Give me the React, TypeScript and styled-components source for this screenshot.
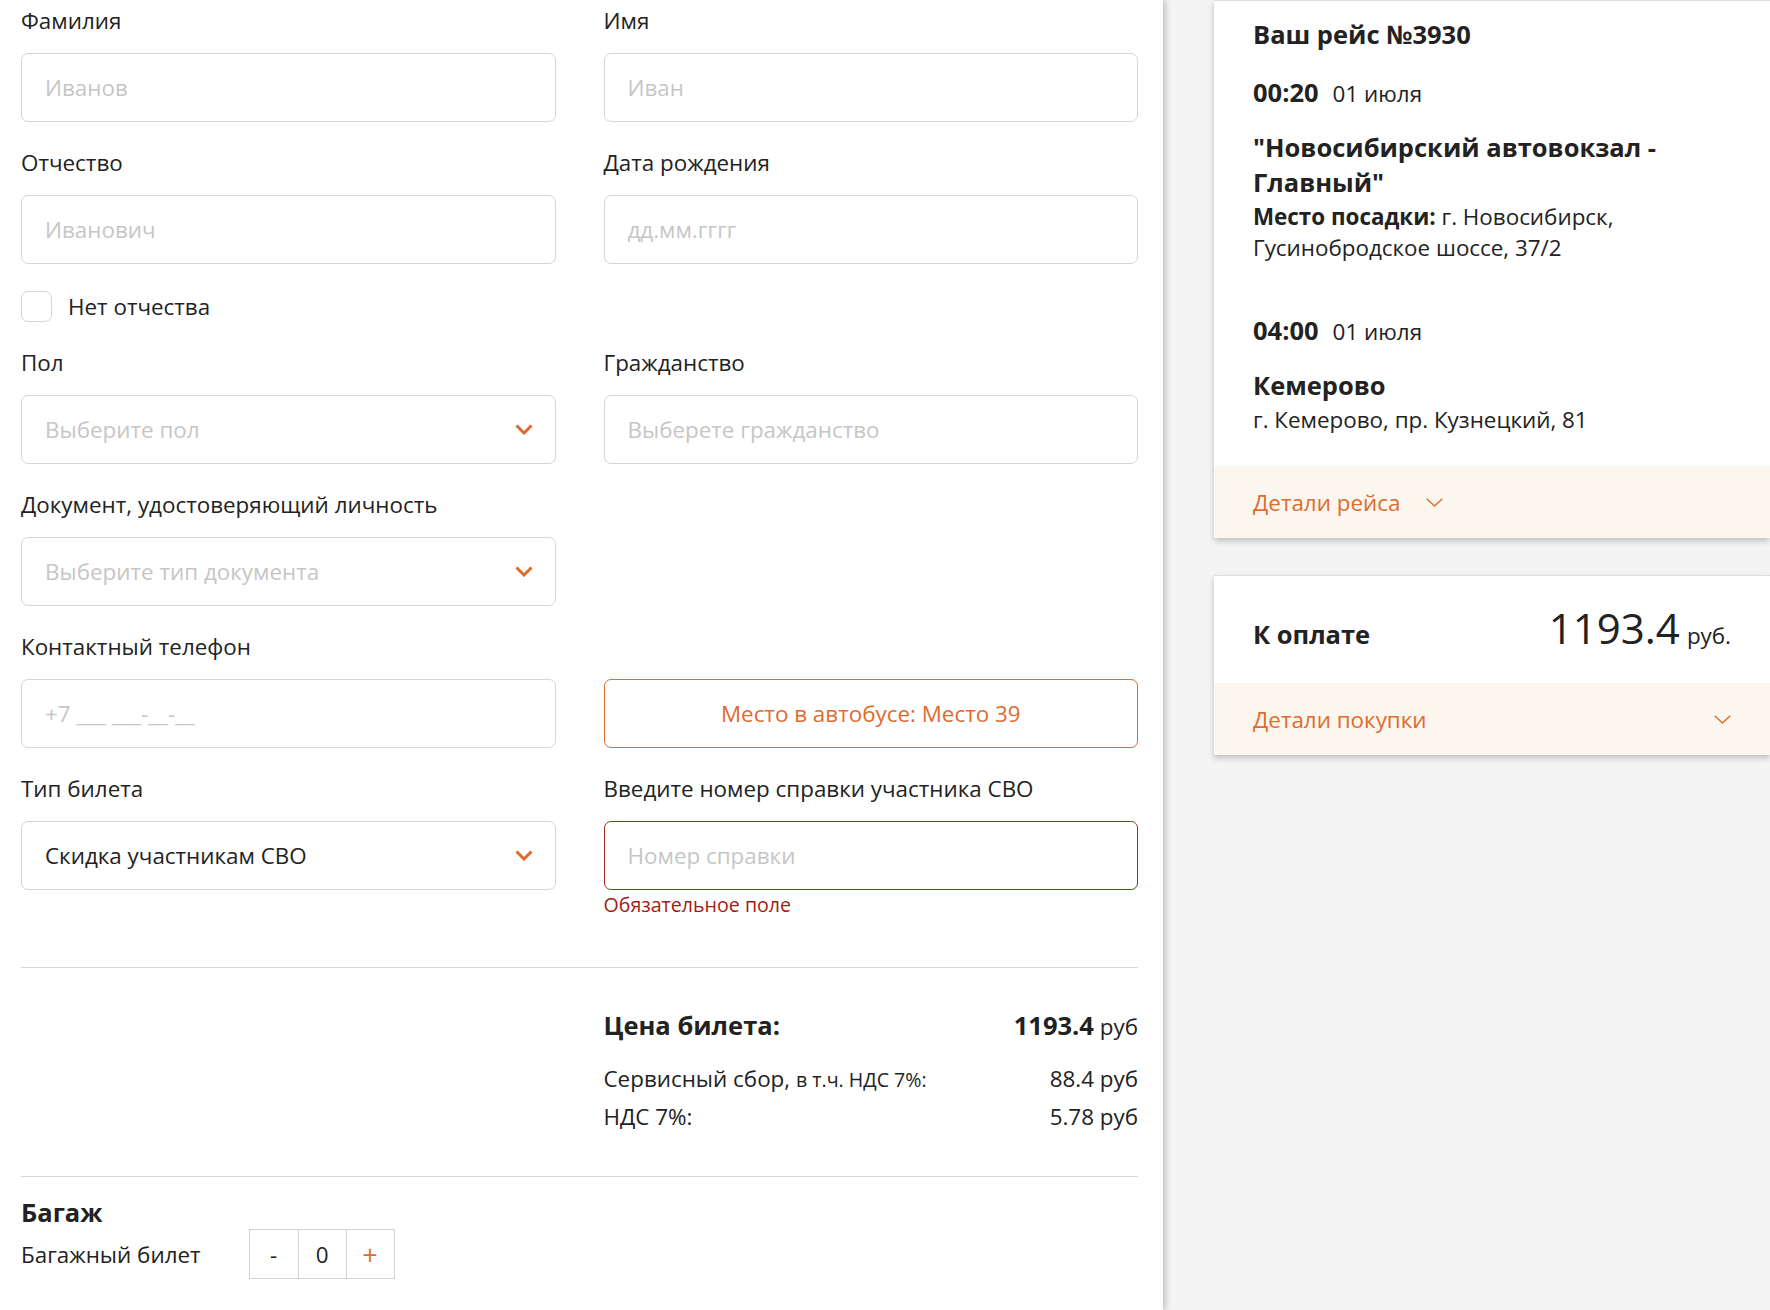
import styled, { createGlobalStyle } from 'styled-components'

const GlobalStyle = createGlobalStyle`
    html, body {
        margin: 0;
        padding: 0;
        background: #f4f4f4;
    }

    body {
        font-family: "Open Sans", "Liberation Sans", sans-serif;
        color: #222;
    }

    * {
        box-sizing: border-box;
    }
`

const orange = '#e06b2e'

const Page = styled.div`
    display: grid;
    grid-template-columns: 1163px 1fr;
    min-height: 1310px;
    background: #f4f4f4;
`

const FormPanel = styled.main`
    position: relative;
    z-index: 1;
    background: #fff;
    padding: 7px 25px 0 21px;
    box-shadow: 3px 0 6px rgba(0, 0, 0, 0.2);
`

const FieldGrid = styled.div`
    display: grid;
    grid-template-columns: 1fr 1fr;
    column-gap: 48px;
    row-gap: 27px;
    align-items: start;
`

const Field = styled.div`
    display: flex;
    flex-direction: column;
    gap: 18px;
`

const Label = styled.label`
    font-size: 22.4px;
    line-height: 28px;
    color: #222;
`

const TextInput = styled.input<{ $invalid?: boolean }>`
    width: 100%;
    height: 69px;
    padding: 0 23px;
    border: 1px solid ${p => (p.$invalid ? '#a9271b' : '#d6d6d6')};
    border-radius: 7px;
    background: #fff;
    font-family: inherit;
    font-size: 22.4px;
    color: #222;
    outline: none;

    &::placeholder {
        color: #c6c6c6;
    }
`

const SelectBox = styled.div<{ $filled?: boolean }>`
    height: 69px;
    padding: 0 22px 0 23px;
    border: 1px solid #d6d6d6;
    border-radius: 7px;
    background: #fff;

    display: flex;
    justify-content: space-between;
    align-items: center;

    font-size: 22.4px;
    color: ${p => (p.$filled ? '#222' : '#c6c6c6')};
`

const SeatButton = styled.button`
    align-self: end;
    height: 69px;
    border: 1px solid ${orange};
    border-radius: 7px;
    background: #fff;
    font-family: inherit;
    font-size: 22.4px;
    color: ${orange};
`

const CheckRow = styled.label`
    display: flex;
    align-items: center;
    gap: 16px;
    font-size: 22.4px;
    line-height: 31px;
`

const CheckBox = styled.span`
    width: 31px;
    height: 31px;
    border: 1px solid #d6d6d6;
    border-radius: 7px;
    background: #fff;
`

const ErrorText = styled.div`
    margin-top: -16px;
    font-size: 19.6px;
    line-height: 25px;
    color: #a11c12;
`

const Divider = styled.hr<{ $top: number }>`
    margin: ${p => p.$top}px 0 0;
    border: none;
    border-top: 1px solid #d9d9d9;
`

const PriceSection = styled.section`
    display: grid;
    grid-template-columns: 1fr 1fr;
    column-gap: 48px;
    padding-top: 40px;
`

const PriceTable = styled.div`
    grid-column: 2;
    display: flex;
    flex-direction: column;
`

const PriceRow = styled.div<{ $main?: boolean }>`
    display: flex;
    justify-content: space-between;
    align-items: baseline;
    font-size: 22.4px;
    line-height: ${p => (p.$main ? '34px' : '37px')};
    margin-bottom: ${p => (p.$main ? '16px' : '0')};
`

const PriceTitle = styled.span`
    font-size: 25.5px;
    font-weight: 700;
`

const Small = styled.span`
    font-size: 19.6px;
`

const Amount = styled.b`
    font-size: 25.5px;
    font-weight: 700;
`

const BaggageSection = styled.section`
    padding-top: 19px;
`

const SectionTitle = styled.h3`
    margin: 0;
    font-size: 25.5px;
    line-height: 33px;
    font-weight: 700;
`

const BaggageRow = styled.div`
    display: flex;
    align-items: center;
    gap: 48px;
    font-size: 22.4px;
`

const Counter = styled.div`
    display: flex;
    border: 1px solid #d2d2d2;
`

const CounterCell = styled.div<{ $accent?: boolean }>`
    width: 48px;
    height: 48px;
    display: flex;
    justify-content: center;
    align-items: center;
    font-size: ${p => (p.$accent ? '27px' : '22.4px')};
    color: ${p => (p.$accent ? orange : '#222')};

    & + & {
        border-left: 1px solid #d2d2d2;
    }
`

const SidePanel = styled.aside`
    padding-left: 51px;
    display: flex;
    flex-direction: column;
    gap: 37px;
`

const Card = styled.div`
    background: #fff;
    border-top: 1px solid #dedede;
    box-shadow: 0 3px 6px rgba(0, 0, 0, 0.22);
`

const TripBody = styled.div`
    padding: 17px 39px 31px;
`

const TripTitle = styled.h2`
    margin: 0;
    font-size: 25.5px;
    line-height: 32px;
    font-weight: 700;
`

const TimeRow = styled.div<{ $top: number }>`
    margin-top: ${p => p.$top}px;
    display: flex;
    align-items: baseline;
    gap: 14px;
    line-height: 32px;
`

const Time = styled.b`
    font-size: 25.5px;
    font-weight: 700;
`

const DateText = styled.span`
    font-size: 22.4px;
`

const StationName = styled.div<{ $top: number }>`
    margin-top: ${p => p.$top}px;
    font-size: 25.5px;
    line-height: 35px;
    font-weight: 700;
`

const StationAddress = styled.div`
    margin-top: 1px;
    font-size: 22.4px;
    line-height: 31px;

    b {
        font-weight: 700;
    }
`

const DetailsBand = styled.div<{ $spread?: boolean }>`
    height: 72px;
    padding: 0 39px;
    background: #fcf7ee;

    display: flex;
    align-items: center;
    justify-content: ${p => (p.$spread ? 'space-between' : 'flex-start')};
    gap: 26px;

    font-size: 22.4px;
    color: ${orange};
`

const TotalRow = styled.div`
    height: 107px;
    padding: 25px 39px 0;
    display: flex;
    justify-content: space-between;
    align-items: baseline;
    line-height: 54px;
`

const TotalLabel = styled.span`
    font-size: 25.5px;
    font-weight: 700;
`

const TotalPrice = styled.span`
    font-size: 42px;

    small {
        margin-left: 7px;
        font-size: 22.4px;
    }
`

const BoldChevron = () => (
    <svg width="18" height="11" viewBox="0 0 18 11" fill="none">
        <polyline points="1.5,1.5 9,9 16.5,1.5" stroke={orange} strokeWidth="3" />
    </svg>
)

const ThinChevron = () => (
    <svg width="17" height="9" viewBox="0 0 17 9" fill="none">
        <polyline points="0.7,0.7 8.5,8 16.3,0.7" stroke={orange} strokeWidth="1.4" />
    </svg>
)

const App = () => {
    return (
        <>
            <GlobalStyle />
            <Page>
                <FormPanel>
                    <FieldGrid>
                        <Field>
                            <Label>Фамилия</Label>
                            <TextInput placeholder="Иванов" />
                        </Field>
                        <Field>
                            <Label>Имя</Label>
                            <TextInput placeholder="Иван" />
                        </Field>

                        <Field>
                            <Label>Отчество</Label>
                            <TextInput placeholder="Иванович" />
                        </Field>
                        <Field>
                            <Label>Дата рождения</Label>
                            <TextInput placeholder="дд.мм.гггг" />
                        </Field>

                        <CheckRow>
                            <CheckBox />
                            Нет отчества
                        </CheckRow>
                        <div />

                        <Field>
                            <Label>Пол</Label>
                            <SelectBox>
                                Выберите пол
                                <BoldChevron />
                            </SelectBox>
                        </Field>
                        <Field>
                            <Label>Гражданство</Label>
                            <TextInput placeholder="Выберете гражданство" />
                        </Field>

                        <Field>
                            <Label>Документ, удостоверяющий личность</Label>
                            <SelectBox>
                                Выберите тип документа
                                <BoldChevron />
                            </SelectBox>
                        </Field>
                        <div />

                        <Field>
                            <Label>Контактный телефон</Label>
                            <TextInput placeholder="+7 ___ ___-__-__" />
                        </Field>
                        <SeatButton>Место в автобусе: Место 39</SeatButton>

                        <Field>
                            <Label>Тип билета</Label>
                            <SelectBox $filled>
                                Скидка участникам СВО
                                <BoldChevron />
                            </SelectBox>
                        </Field>
                        <Field>
                            <Label>Введите номер справки участника СВО</Label>
                            <TextInput $invalid placeholder="Номер справки" />
                            <ErrorText>Обязательное поле</ErrorText>
                        </Field>
                    </FieldGrid>

                    <Divider $top={50} />

                    <PriceSection>
                        <PriceTable>
                            <PriceRow $main>
                                <PriceTitle>Цена билета:</PriceTitle>
                                <span><Amount>1193.4</Amount> руб</span>
                            </PriceRow>
                            <PriceRow>
                                <span>Сервисный сбор, <Small>в т.ч. НДС 7%:</Small></span>
                                <span>88.4 руб</span>
                            </PriceRow>
                            <PriceRow>
                                <span>НДС 7%:</span>
                                <span>5.78 руб</span>
                            </PriceRow>
                        </PriceTable>
                    </PriceSection>

                    <Divider $top={41} />

                    <BaggageSection>
                        <SectionTitle>Багаж</SectionTitle>
                        <BaggageRow>
                            Багажный билет
                            <Counter>
                                <CounterCell>-</CounterCell>
                                <CounterCell>0</CounterCell>
                                <CounterCell $accent>+</CounterCell>
                            </Counter>
                        </BaggageRow>
                    </BaggageSection>
                </FormPanel>

                <SidePanel>
                    <Card>
                        <TripBody>
                            <TripTitle>Ваш рейс №3930</TripTitle>

                            <TimeRow $top={26}>
                                <Time>00:20</Time>
                                <DateText>01 июля</DateText>
                            </TimeRow>
                            <StationName $top={20}>"Новосибирский автовокзал - Главный"</StationName>
                            <StationAddress>
                                <b>Место посадки:</b> г. Новосибирск, Гусинобродское шоссе, 37/2
                            </StationAddress>

                            <TimeRow $top={51}>
                                <Time>04:00</Time>
                                <DateText>01 июля</DateText>
                            </TimeRow>
                            <StationName $top={20}>Кемерово</StationName>
                            <StationAddress>г. Кемерово, пр. Кузнецкий, 81</StationAddress>
                        </TripBody>
                        <DetailsBand>
                            Детали рейса
                            <ThinChevron />
                        </DetailsBand>
                    </Card>

                    <Card>
                        <TotalRow>
                            <TotalLabel>К оплате</TotalLabel>
                            <TotalPrice>1193.4<small>руб.</small></TotalPrice>
                        </TotalRow>
                        <DetailsBand $spread>
                            Детали покупки
                            <ThinChevron />
                        </DetailsBand>
                    </Card>
                </SidePanel>
            </Page>
        </>
    )
}

export default App
